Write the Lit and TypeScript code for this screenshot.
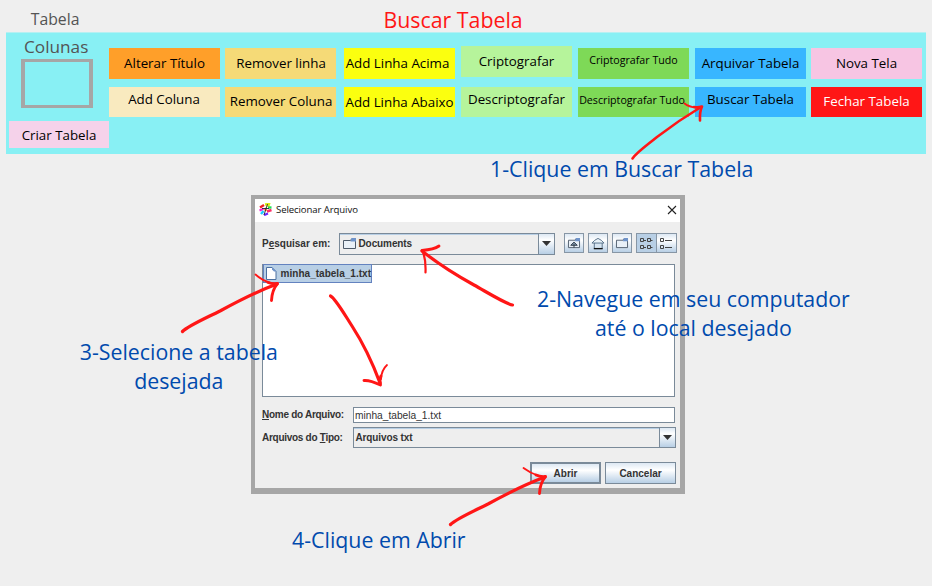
import { LitElement, html, svg, css } from "lit";
import { customElement } from "lit/decorators.js";
import { styleMap } from "lit/directives/style-map.js";

interface Action {
  label: string;
  bg: string;
  lift?: number;
  nudge?: number;
  raise?: number;
  small?: boolean;
  light?: boolean;
}

const COLUMNS: Action[][] = [
  [
    { label: "Alterar Título", bg: "#ff9f29" },
    { label: "Add Coluna", bg: "#f9eabf", lift: 5, nudge: 1 },
  ],
  [
    { label: "Remover linha", bg: "#f5da77", nudge: -1 },
    { label: "Remover Coluna", bg: "#f5da77", lift: 1, nudge: -1 },
  ],
  [
    { label: "Add Linha Acima", bg: "#fbff0f", nudge: 4 },
    { label: "Add Linha Abaixo", bg: "#fbff0f" },
  ],
  [
    { label: "Criptografar", bg: "#b6f49b", raise: 2 },
    { label: "Descriptografar", bg: "#b6f49b", lift: 5 },
  ],
  [
    { label: "Criptografar Tudo", bg: "#7ed957", small: true, lift: 7 },
    { label: "Descriptografar Tudo", bg: "#7ed957", small: true, lift: 4, nudge: 3 },
  ],
  [
    { label: "Arquivar Tabela", bg: "#38b6ff" },
    { label: "Buscar Tabela", bg: "#38b6ff", lift: 5 },
  ],
  [
    { label: "Nova Tela", bg: "#f7c5e3" },
    { label: "Fechar Tabela", bg: "#ff1616", lift: 1, light: true },
  ],
];

@customElement("table-toolbar")
export class TableToolbar extends LitElement {
  static styles = css`
    :host {
      display: flex;
      box-sizing: border-box;
      height: 121.500px;
      margin: 0 6px;
      padding: 0 4px 0 3px;
      background: linear-gradient(#b6f0f2 1px, #88f0f4 1px);
      font-size: 13.33px;
      line-height: 18px;
      color: #000;
    }
    .first { width: 100px; display: flex; flex-direction: column; }
    .caption {
      font-size: 17.2px;
      line-height: 24px;
      padding: 3px 0 0 15px;
      color: #545454;
    }
    .field {
      box-sizing: border-box;
      width: 72px;
      height: 48.500px;
      margin-left: 12px;
      border: solid #a6a6a6;
      border-width: 3px 4px;
    }
    .create {
      height: 27px;
      margin-top: 13.500px;
      background: #f5d2ea;
      display: grid;
      place-items: center;
    }
    .columns {
      flex: 1;
      display: grid;
      grid-template-columns: 116px 119px 117px 117px 117px 116px 111px;
      padding-top: 16px;
    }
    .column { display: flex; flex-direction: column; gap: 8px; }
    .action {
      box-sizing: border-box;
      width: 111px;
      height: 30.5px;
      display: flex;
      align-items: center;
      justify-content: center;
      white-space: nowrap;
    }
    .small { font-size: 10.67px; }
    .light { color: #fff; }
  `;

  render() {
    return html`
      <div class="first">
        <div class="caption">Colunas</div>
        <div class="field"></div>
        <div class="create">Criar Tabela</div>
      </div>
      <div class="columns">
        ${COLUMNS.map(
          (col) => html`<div class="column">
            ${col.map(
              (a) => html`<div
                class="action ${a.small ? "small" : ""} ${a.light ? "light" : ""}"
                style=${styleMap({
                  background: a.bg,
                  paddingBottom: `${a.lift ?? 0}px`,
                  paddingRight: `${Math.max(a.nudge ?? 0, 0)}px`,
                  paddingLeft: `${Math.max(-(a.nudge ?? 0), 0)}px`,
                  marginTop: `${-(a.raise ?? 0)}px`,
                  marginBottom: `${a.raise ?? 0}px`,
                })}
              >${a.label}</div>`
            )}
          </div>`
        )}
      </div>
    `;
  }
}

const folder = svg`
  <path d="M1.500 3.500h7l1-1.500h4v9.500h-12z" fill="#e9f0f7" stroke="#4d5a69"/>
  <path d="M9.500 1H14v3.500H8.500z" fill="#6f93c9"/>`;

@customElement("file-dialog")
export class FileDialog extends LitElement {
  static styles = css`
    :host {
      display: flex;
      flex-direction: column;
      box-sizing: border-box;
      width: 434px;
      height: 299px;
      border: solid #a6a6a6;
      border-width: 4px 5px 6px 4px;
      background: #eee;
      font: bold 10px/14px "Liberation Sans", Arial, sans-serif;
      color: #333;
    }
    .title {
      height: 23px;
      display: flex;
      align-items: center;
      padding: 0 3px 2px 4px;
      background: #fff;
      font: 9.6px/14px "Open Sans", sans-serif;
      color: #111;
      box-sizing: border-box;
    }
    .title span { flex: 1; padding-left: 4px; letter-spacing: -0.1px; }
    .body { padding: 10px 4px 0 7px; display: flex; flex-direction: column; }
    .row { display: flex; align-items: center; }
    .row > * { flex: none; }
    .look { height: 23px; }
    .look label { width: 76.500px; }
    .combo {
      box-sizing: border-box;
      border: 1px solid #7a8a99;
      box-shadow: inset 0 1px #b8cfe5;
      display: flex;
      align-items: center;
      height: 22px;
      padding-left: 2px;
    }
    .combo .text { flex: 1; }
    .look .combo { width: 216px; margin-right: 9px; }
    .look .text { padding-left: 2px; letter-spacing: -0.1px; }
    .drop {
      width: 15px;
      height: 100%;
      border-left: 1px solid #7a8a99;
      display: grid;
      place-items: center;
      background: linear-gradient(#dde8f3, #fff 30%, #b8cfe5);
    }
    .tool {
      box-sizing: border-box;
      width: 20.5px;
      height: 20.5px;
      border: 1px solid #8796a5;
      margin: -1px 3.700px 0 0;
      display: grid;
      place-items: center;
      background: linear-gradient(#dde8f3, #fff 35%, #b8cfe5);
    }
    .joined { margin-right: -0.5px; background: #b8cfe5; }
    .list {
      box-sizing: border-box;
      width: 413px;
      height: 133px;
      margin-top: 9px;
      border: 1px solid #7a8a99;
      background: #fff;
    }
    .file {
      box-sizing: border-box;
      width: 109px;
      height: 19px;
      margin-top: -1px;
      border: 1px solid #6382bf;
      background: #b8cfe5;
      display: flex;
      align-items: center;
      padding-left: 1px;
      white-space: nowrap;
    }
    .file span { padding-left: 4px; letter-spacing: 0.02px; }
    .form label { width: 91px; padding-top: 1px; letter-spacing: -0.28px; }
    .name { margin-top: 9px; height: 17px; }
    .type { margin-top: 4px; height: 21px; }
    .input {
      box-sizing: border-box;
      width: 322px;
      height: 16px;
      border: 1px solid #7a8a99;
      background: #fff;
      font-weight: normal;
      font-size: 10.2px;
      line-height: 15px;
      padding-left: 1px;
    }
    .type .combo { width: 322.5px; height: 21px; padding-left: 1.5px; }
    .type .text { padding-top: 1px; letter-spacing: -0.12px; }
    .buttons { justify-content: flex-end; gap: 4px; margin-top: 14px; }
    .btn {
      box-sizing: border-box;
      width: 71px;
      height: 22px;
      padding-top: 1px;
      border: 1px solid #7a8a99;
      display: grid;
      place-items: center;
      background: linear-gradient(#dde8f3, #fff 35%, #b8cfe5);
    }
    .default { border-width: 2px; }
    svg { display: block; }
  `;

  private arrow() {
    return html`<div class="drop"><svg width="9" height="5"><path d="M0 0h9L4.5 5z" fill="#333" /></svg></div>`;
  }

  render() {
    return html`
      <div class="title">
        <svg width="13" height="13" viewBox="0 0 13 13" fill="none" stroke-width="2.400">
          <path d="M1 4.500l4-2.500" stroke="#f02020" />
          <path d="M6 1.500l4-.5-1 3" stroke="#d9ec18" />
          <path d="M.5 7.500l4-1.500" stroke="#f320d8" />
          <path d="M9 4.500h3.500" stroke="#20df58" />
          <path d="M2 11l2.500-3" stroke="#17cfff" />
          <path d="M8 8.500l4.500-1.500" stroke="#ff2c66" />
          <path d="M5 12l4-1.500" stroke="#6c28ff" />
          <path d="M6 5l1 3" stroke="#ff9b18" />
          <path d="M8.500 1L5 12M3 5.500h7" stroke="#24203c" stroke-width=".9" />
        </svg>
        <span>Selecionar Arquivo</span>
        <svg width="10" height="10"><path d="M1 1l8 8M9 1L1 9" stroke="#222" stroke-width="1.100" /></svg>
      </div>
      <div class="body">
        <div class="row look">
          <label>P<u>e</u>squisar em:</label>
          <div class="combo">
            <svg width="15" height="13">${folder}</svg>
            <span class="text">Documents</span>
            ${this.arrow()}
          </div>
          <div class="tool"><svg width="14" height="12" viewBox="0 0 15 13">${folder}<path d="M4 9l3.500-3.500L11 9zM7.500 8v3.500" fill="#7c91a5" stroke="#2d3a46" /></svg></div>
          <div class="tool"><svg width="14" height="13" viewBox="0 0 15 14"><path d="M3.500 6v6.500h8.500V6" fill="#d7e5f1" stroke="#536d86" /><path d="M1 6.500L4 3.500 7.500 1.500 11 3.500l3 3z" fill="#e9f2f8" stroke="#536d86" /><path d="M3 12.500h9.500" stroke="#111" stroke-width="1.400" /></svg></div>
          <div class="tool"><svg width="14" height="12" viewBox="0 0 15 13">${folder}</svg></div>
          <div class="tool joined"><svg width="14" height="13" fill="none" stroke="#444"><path d="M1.500 1.500h3v3h-3zM8.500 1.500h3v3h-3zM1.500 8.500h3v3h-3zM8.500 8.500h3v3h-3zM5 3.500h2M12 3.500h1.500M5 10.500h2M12 10.500h1.500" /></svg></div>
          <div class="tool"><svg width="14" height="13" fill="none" stroke="#444"><path d="M1.500 1.500h3v3h-3zM1.500 8.500h3v3h-3zM6 3.500h7M6 10.500h7" /></svg></div>
        </div>
        <div class="list">
          <div class="file">
            <svg width="12" height="15"><path d="M1.500 1.500h5.500l4 4v8h-9.500z" fill="#fff" stroke="#4c70a0" /><path d="M7 1l4.500 4.500H9L7 3.500z" fill="#6f93c9" /></svg>
            <span>minha_tabela_1.txt</span>
          </div>
        </div>
        <div class="row form name">
          <label><u>N</u>ome do Arquivo:</label>
          <div class="input">minha_tabela_1.txt</div>
        </div>
        <div class="row form type">
          <label>Arquivos do <u>T</u>ipo:</label>
          <div class="combo"><span class="text">Arquivos txt</span>${this.arrow()}</div>
        </div>
        <div class="row buttons">
          <div class="btn default">Abrir</div>
          <div class="btn">Cancelar</div>
        </div>
      </div>
    `;
  }
}

@customElement("app-root")
export class AppRoot extends LitElement {
  static styles = css`
    :host {
      display: block;
      position: relative;
      width: 932px;
      height: 586px;
      overflow: hidden;
      background: #efefef;
      font-family: "Open Sans", sans-serif;
    }
    header {
      height: 32px;
      display: flex;
      align-items: center;
    }
    .section { box-sizing: border-box; width: 383.500px; padding: 6px 0 0 30.700px; font-size: 15.8px; color: #545454; }
    h1 { margin: 0; padding-top: 7px; font-size: 21.33px; line-height: 29px; font-weight: 400; color: #ff1616; }
    file-dialog { margin: 41.500px 0 0 251px; }
    .note {
      position: absolute;
      font-size: 21.33px;
      line-height: 29px;
      text-align: center;
      white-space: nowrap;
      color: #004aad;
    }
    .n1 { left: 490px; top: 154px; }
    .n2 { left: 537px; top: 284px; }
    .n3 { left: 79.700px; top: 337px; }
    .n4 { left: 292px; top: 525px; }
    .arrows {
      position: absolute;
      inset: 0;
      fill: none;
      stroke: #ff1616;
      stroke-linecap: round;
      stroke-linejoin: round;
    }
  `;

  render() {
    return html`
      <header>
        <div class="section">Tabela</div>
        <h1>Buscar Tabela</h1>
      </header>
      <table-toolbar></table-toolbar>
      <file-dialog></file-dialog>
      <div class="note n1">1-Clique em Buscar Tabela</div>
      <div class="note n2">2-Navegue em seu computador<br />até o local desejado</div>
      <div class="note n3">3-Selecione a tabela<br />desejada</div>
      <div class="note n4">4-Clique em Abrir</div>
      <svg class="arrows" width="932" height="586">
        <g stroke-width="3.200">
          <path d="M632.500 158.500C637 152 646 146 657 137C670 127 686 116 701 107" stroke-width="2.600" />
          <path d="M512.500 305C506 304 490 294 474 285C454 274 436 262 422 251" />
          <path d="M182.500 331.500C188 326 204 319 220 311C240 300 258 291 277 284" />
          <path d="M330.500 296C335 298 343 312 352 326C363 343 373 364 380 383" />
          <path d="M450.500 524.500C456 519 472 512 488 504C508 493 526 484 545 477" />
        </g>
        <g stroke-width="2.900">
          <path d="M694 107Q698 108 702 106.500Q699.500 112 700 120.500" stroke-width="2.600" />
          <path d="M439 246Q434 249.500 422 250.500" />
          <path d="M268 282.500Q272 284 277.500 283.500Q272 290 271.500 300.500" />
          <path d="M364 380.500Q370 380 380.500 385Q379 380 381 376" />
          <path d="M536 475Q540 477 545.500 476.500Q540 483 539.500 493.500" />
        </g>
        <g stroke-width="1.800">
          <path d="M684.500 103.500Q689 107 696 107.500" />
          <path d="M423 252Q426 260 425.500 272.500" stroke-width="2.200" />
          <path d="M255.500 274.500Q262 280.500 271 283" />
          <path d="M381 379Q381.500 370 387 365" />
          <path d="M523.500 468Q530 473 539 476" />
        </g>
      </svg>
    `;
  }
}
